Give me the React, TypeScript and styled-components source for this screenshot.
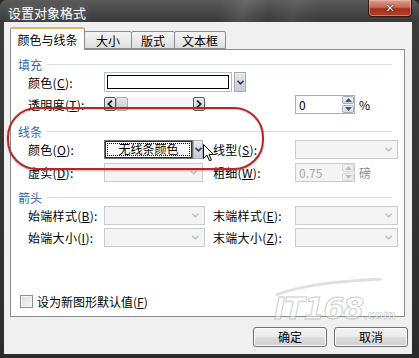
import React from "react"
import styled, { createGlobalStyle } from "styled-components"

const font = `"Noto Sans CJK SC", "Liberation Sans", sans-serif`

const GlobalStyle = createGlobalStyle`
  html, body {
    margin: 0;
    padding: 0;
    background: #2b2b2b;
  }
  body {
    width: 419px;
    height: 358px;
    overflow: hidden;
    font-family: ${font};
  }
`

const Chevron = ({ color = "#33415f" }: { color?: string }) => (
  <svg width="7" height="5" viewBox="0 0 7 5">
    <path d="M0.5 0.8 L3.5 3.8 L6.5 0.8" fill="none" stroke={color} strokeWidth="1.6" />
  </svg>
)

const Triangle = ({ up, color }: { up?: boolean; color: string }) => (
  <svg width="7" height="4" viewBox="0 0 7 4">
    <path d={up ? "M0 4 L3.5 0 L7 4 Z" : "M0 0 L3.5 4 L7 0 Z"} fill={color} />
  </svg>
)

const Arrow = ({ left }: { left?: boolean }) => (
  <svg width="6" height="8" viewBox="0 0 6 8">
    <path d={left ? "M5 0.5 L1.2 4 L5 7.5" : "M1 0.5 L4.8 4 L1 7.5"} fill="none" stroke="#1d2433" strokeWidth="1.8" />
  </svg>
)

const Cursor = () => (
  <svg width="11" height="18" viewBox="0 0 11 18">
    <path d="M0.5 0.5 L0.5 14.5 L4 11.2 L6.4 16.8 L8.4 16 L6 10.4 L10.5 10.4 Z" fill="#fff" stroke="#000" strokeWidth="1" />
  </svg>
)

export default function App() {
  return (
    <>
      <GlobalStyle />
      <Window>
        <TitleBar>
          <Title>设置对象格式</Title>
          <CloseButton>
            <CloseGlyph>✕</CloseGlyph>
          </CloseButton>
        </TitleBar>
        <Client>
          <TabStrip>
            <Tab $w={75} $active>颜色与线条</Tab>
            <Tab $w={48}>大小</Tab>
            <Tab $w={44}>版式</Tab>
            <Tab $w={52}>文本框</Tab>
          </TabStrip>
          <Panel>
            <SectionHeader $top={0}>
              <span>填充</span>
              <Rule />
            </SectionHeader>
            <Row $h={20}>
              <Label>颜色(<u>C</u>):</Label>
              <ColorCombo>
                <ColorField>
                  <ColorSwatch />
                </ColorField>
                <ComboButton>
                  <Chevron />
                </ComboButton>
              </ColorCombo>
            </Row>
            <Row $h={22} $top={1}>
              <LeftCell>
                <Label>透明度(<u>T</u>):</Label>
                <Slider>
                  <SliderButton>
                    <Arrow left />
                  </SliderButton>
                  <SliderThumb />
                  <SliderTrack />
                  <SliderButton>
                    <Arrow />
                  </SliderButton>
                </Slider>
              </LeftCell>
              <RightCell>
                <Label $w={82} />
                <Spinner>
                  <SpinValue>0</SpinValue>
                  <SpinButtons>
                    <SpinButton>
                      <Triangle up color="#44536f" />
                    </SpinButton>
                    <SpinButton>
                      <Triangle color="#44536f" />
                    </SpinButton>
                  </SpinButtons>
                </Spinner>
                <Unit>%</Unit>
              </RightCell>
            </Row>

            <SectionHeader $top={8}>
              <span>线条</span>
              <Rule />
            </SectionHeader>
            <Row $h={20}>
              <LeftCell>
                <Label>颜色(<u>O</u>):</Label>
                <FocusCombo>
                  <FocusField>
                    <FocusText>无线条颜色</FocusText>
                  </FocusField>
                  <ComboButton $w={10}>
                    <Chevron />
                  </ComboButton>
                </FocusCombo>
              </LeftCell>
              <RightCell>
                <Label $w={82}>线型(<u>S</u>):</Label>
                <Combo $w={103}>
                  <Chevron color="#c4c8cf" />
                </Combo>
              </RightCell>
            </Row>
            <Row $h={20} $top={3}>
              <LeftCell>
                <Label>虚实(<u>D</u>):</Label>
                <Combo $w={99}>
                  <Chevron color="#c4c8cf" />
                </Combo>
              </LeftCell>
              <RightCell>
                <Label $w={82}>粗细(<u>W</u>):</Label>
                <Spinner $disabled>
                  <SpinValue $disabled>0.75</SpinValue>
                  <SpinButtons>
                    <SpinButton $disabled>
                      <Triangle up color="#b9bec7" />
                    </SpinButton>
                    <SpinButton $disabled>
                      <Triangle color="#b9bec7" />
                    </SpinButton>
                  </SpinButtons>
                </Spinner>
                <Unit $muted>磅</Unit>
              </RightCell>
            </Row>

            <SectionHeader $top={7}>
              <span>箭头</span>
              <Rule />
            </SectionHeader>
            <Row $h={20}>
              <LeftCell>
                <Label>始端样式(<u>B</u>):</Label>
                <Combo $w={101}>
                  <Chevron color="#c4c8cf" />
                </Combo>
              </LeftCell>
              <RightCell>
                <Label $w={82}>末端样式(<u>E</u>):</Label>
                <Combo $w={103}>
                  <Chevron color="#c4c8cf" />
                </Combo>
              </RightCell>
            </Row>
            <Row $h={20} $top={2}>
              <LeftCell>
                <Label>始端大小(<u>I</u>):</Label>
                <Combo $w={101}>
                  <Chevron color="#c4c8cf" />
                </Combo>
              </LeftCell>
              <RightCell>
                <Label $w={82}>末端大小(<u>Z</u>):</Label>
                <Combo $w={103}>
                  <Chevron color="#c4c8cf" />
                </Combo>
              </RightCell>
            </Row>

            <CheckRow>
              <CheckBox />
              <span>设为新图形默认值(<u>F</u>)</span>
            </CheckRow>
          </Panel>
          <ButtonRow>
            <DialogButton>确定</DialogButton>
            <DialogButton>取消</DialogButton>
          </ButtonRow>
        </Client>

        <Annotation />
        <PointerMark>
          <Cursor />
        </PointerMark>
        <Watermark>
          <svg width="110" height="18" viewBox="0 0 110 18">
            <path d="M2 17 C30 6 70 3 108 1" fill="none" stroke="rgba(150,150,150,0.3)" strokeWidth="3" />
          </svg>
          <WatermarkText>
            IT168<WatermarkDomain>.com</WatermarkDomain>
          </WatermarkText>
        </Watermark>
      </Window>
    </>
  )
}

const Window = styled.div`
  position: relative;
  width: 419px;
  height: 358px;
  display: flex;
  flex-direction: column;
  background: linear-gradient(180deg, #505050 0px, #3c3c3c 22px, #2c2c2c 100%);
  border-radius: 7px 7px 0 0;
  overflow: hidden;
  font-family: ${font};
  font-size: 12px;
  color: #000;
`

const TitleBar = styled.div`
  height: 22px;
  flex-shrink: 0;
  display: flex;
  align-items: flex-start;
  justify-content: space-between;
  padding-left: 8px;
  background:
    linear-gradient(100deg, transparent 52%, rgba(255, 255, 255, 0.1) 58%, transparent 64%, rgba(255, 255, 255, 0.06) 70%, transparent 76%),
    linear-gradient(180deg, #5a5a5a 0%, #454545 60%, #3a3a3a 100%);
`

const Title = styled.div`
  color: #fff;
  font-size: 13px;
  line-height: 26px;
  text-shadow: 0 0 6px rgba(255, 255, 255, 0.35);
`

const CloseButton = styled.div`
  width: 44px;
  height: 17px;
  margin-right: 7px;
  box-sizing: border-box;
  display: flex;
  align-items: center;
  justify-content: center;
  border: 1px solid #3a1510;
  border-top: none;
  border-radius: 0 0 4px 4px;
  background: linear-gradient(180deg, #d8a090 0%, #c76a55 45%, #a8301c 55%, #b5402a 100%);
  box-shadow: inset 0 0 0 1px rgba(255, 210, 200, 0.4);
`

const CloseGlyph = styled.span`
  color: #fff;
  font-family: "DejaVu Sans", sans-serif;
  font-size: 11px;
  font-weight: bold;
  text-shadow: 0 0 2px #4a0d05, 0 0 1px #4a0d05;
`

const Client = styled.div`
  flex: 1;
  margin: 0 7px 4px 4px;
  padding: 5px 0 0 6px;
  display: flex;
  flex-direction: column;
  background: #f0f0f0;
`

const TabStrip = styled.div`
  height: 22px;
  display: flex;
  align-items: flex-end;
  position: relative;
  z-index: 1;
`

const Tab = styled.div<{ $w: number; $active?: boolean }>`
  width: ${p => p.$w}px;
  height: ${p => (p.$active ? 23 : 18)}px;
  margin-bottom: ${p => (p.$active ? -1 : 0)}px;
  margin-left: -1px;
  box-sizing: border-box;
  display: flex;
  align-items: center;
  justify-content: center;
  font-size: 12px;
  border: 1px solid #898c95;
  border-bottom: ${p => (p.$active ? "none" : "1px solid #898c95")};
  border-top: ${p => (p.$active ? "2px solid #e8b35e" : "1px solid #898c95")};
  border-radius: 2px 2px 0 0;
  background: ${p => (p.$active ? "#fff" : "linear-gradient(180deg, #f3f3f3 0%, #ebebeb 50%, #dedede 100%)")};
  padding-top: ${p => (p.$active ? 0 : 1)}px;
  &:first-child {
    margin-left: 0;
  }
`

const Panel = styled.div`
  height: 268px;
  margin-right: 7px;
  box-sizing: border-box;
  display: flex;
  flex-direction: column;
  padding: 6px 6px 7px 7px;
  border: 1px solid #898c95;
  background: #fff;
`

const SectionHeader = styled.div<{ $top: number }>`
  height: 16px;
  margin-top: ${p => p.$top}px;
  display: flex;
  align-items: center;
  gap: 5px;
  color: #3366a8;
  font-size: 12px;
`

const Rule = styled.div`
  flex: 1;
  height: 1px;
  margin-right: 6px;
  background: #d8dde3;
`

const Row = styled.div<{ $h: number; $top?: number }>`
  height: ${p => p.$h}px;
  margin-top: ${p => p.$top ?? 0}px;
  padding-left: 10px;
  display: flex;
  align-items: center;
`

const LeftCell = styled.div`
  width: 177px;
  display: flex;
  align-items: center;
`

const RightCell = styled.div`
  margin-left: 8px;
  display: flex;
  align-items: center;
`

const Label = styled.div<{ $w?: number }>`
  width: ${p => p.$w ?? 76}px;
  flex-shrink: 0;
  white-space: nowrap;
  font-size: 12px;
  letter-spacing: 0.3px;
  u {
    text-underline-offset: 1px;
  }
`

const ColorCombo = styled.div`
  width: 142px;
  height: 20px;
  display: flex;
  gap: 2px;
`

const ColorField = styled.div`
  flex: 1;
  box-sizing: border-box;
  padding: 2px;
  border: 1px solid #b9bcc2;
  background: #fff;
  display: flex;
`

const ColorSwatch = styled.div`
  flex: 1;
  border: 1px solid #000;
  background: #fff;
`

const ComboButton = styled.div<{ $w?: number }>`
  width: ${p => p.$w ?? 12}px;
  flex-shrink: 0;
  box-sizing: border-box;
  display: flex;
  align-items: center;
  justify-content: center;
  border: 1px solid #a7abb3;
  background: linear-gradient(180deg, #eaebed 0%, #d6d8dc 50%, #c8cbd1 100%);
`

const Slider = styled.div`
  width: 141px;
  height: 14px;
  display: flex;
`

const SliderButton = styled.div`
  width: 12px;
  box-sizing: border-box;
  display: flex;
  align-items: center;
  justify-content: center;
  border: 1px solid #555a63;
  border-radius: 2px;
  background: linear-gradient(180deg, #e9eaec 0%, #cfd2d6 100%);
`

const SliderThumb = styled.div`
  width: 12px;
  box-sizing: border-box;
  border: 1px solid #a9adb4;
  border-radius: 2px;
  background: linear-gradient(180deg, #e4e5e7 0%, #c9ccd0 100%);
`

const SliderTrack = styled.div`
  flex: 1;
  background: #f6f6f6;
`

const Spinner = styled.div<{ $disabled?: boolean }>`
  width: 60px;
  height: 19px;
  box-sizing: border-box;
  display: flex;
  border: 1px solid ${p => (p.$disabled ? "#c9cbcf" : "#abadb3")};
  background: ${p => (p.$disabled ? "#f4f4f4" : "#fff")};
`

const SpinValue = styled.div<{ $disabled?: boolean }>`
  flex: 1;
  padding-left: 3px;
  line-height: 17px;
  font-size: 12px;
  color: ${p => (p.$disabled ? "#a9a9a9" : "#000")};
`

const SpinButtons = styled.div`
  width: 12px;
  display: flex;
  flex-direction: column;
  gap: 1px;
`

const SpinButton = styled.div<{ $disabled?: boolean }>`
  flex: 1;
  display: flex;
  align-items: center;
  justify-content: center;
  border: 1px solid ${p => (p.$disabled ? "#d6d8dc" : "#a4adbd")};
  border-radius: 2px;
  background: ${p => (p.$disabled ? "#f0f0f0" : "linear-gradient(180deg, #f2f5fa 0%, #d5dce7 100%)")};
`

const Unit = styled.span<{ $muted?: boolean }>`
  margin-left: 4px;
  font-size: 12px;
  color: ${p => (p.$muted ? "#8a8a8a" : "#000")};
`

const FocusCombo = styled.div`
  width: 99px;
  height: 19px;
  display: flex;
`

const FocusField = styled.div`
  flex: 1;
  box-sizing: border-box;
  padding: 2px;
  display: flex;
  border: 1px solid #6c6f75;
  box-shadow: inset 0 0 0 1px #2c2e33;
  background: #fff;
`

const FocusText = styled.div`
  flex: 1;
  display: flex;
  align-items: center;
  justify-content: center;
  border: 1px dotted #000;
  font-size: 12px;
  line-height: 12px;
`

const Combo = styled.div<{ $w: number }>`
  width: ${p => p.$w}px;
  height: 19px;
  box-sizing: border-box;
  display: flex;
  align-items: center;
  justify-content: flex-end;
  padding-right: 5px;
  border: 1px solid #c9cbcf;
  background: #f4f4f4;
`

const CheckRow = styled.div`
  margin-top: auto;
  height: 16px;
  padding-left: 2px;
  display: flex;
  align-items: center;
  gap: 4px;
  font-size: 12px;
`

const CheckBox = styled.div`
  width: 13px;
  height: 13px;
  box-sizing: border-box;
  border: 1px solid #8f8f8f;
  background: linear-gradient(135deg, #dcdcdc 0%, #f6f6f6 100%);
  box-shadow: inset 0 0 0 1px #f4f4f4;
`

const ButtonRow = styled.div`
  margin-top: 10px;
  padding-right: 4px;
  display: flex;
  justify-content: flex-end;
  gap: 7px;
`

const DialogButton = styled.div`
  width: 74px;
  height: 20px;
  box-sizing: border-box;
  display: flex;
  align-items: center;
  justify-content: center;
  font-size: 12px;
  line-height: 14px;
  border: 1px solid #707070;
  border-radius: 3px;
  background: linear-gradient(180deg, #f2f2f2 0%, #ebebeb 49%, #dddddd 51%, #cfcfcf 100%);
  box-shadow: inset 0 0 0 1px #fbfbfb;
`

const Annotation = styled.div`
  position: absolute;
  left: 7px;
  top: 107px;
  width: 257px;
  height: 63px;
  box-sizing: border-box;
  border: 2px solid #b02a2c;
  border-radius: 30px;
  box-shadow: 0 1px 2px rgba(120, 20, 20, 0.35), inset 0 1px 1px rgba(120, 20, 20, 0.2);
  pointer-events: none;
`

const PointerMark = styled.div`
  position: absolute;
  left: 203px;
  top: 144px;
  width: 11px;
  height: 18px;
  pointer-events: none;
`

const Watermark = styled.div`
  position: absolute;
  left: 274px;
  top: 278px;
  display: flex;
  flex-direction: column;
  pointer-events: none;
`

const WatermarkText = styled.div`
  font-family: "DejaVu Sans", sans-serif;
  font-style: italic;
  font-weight: bold;
  font-size: 30px;
  line-height: 26px;
  letter-spacing: -1px;
  color: rgba(255, 255, 255, 0.45);
  -webkit-text-stroke: 1px rgba(120, 120, 120, 0.4);
`

const WatermarkDomain = styled.span`
  font-size: 12px;
  letter-spacing: 0;
  font-style: normal;
  -webkit-text-stroke: 0.6px rgba(120, 120, 120, 0.45);
`
